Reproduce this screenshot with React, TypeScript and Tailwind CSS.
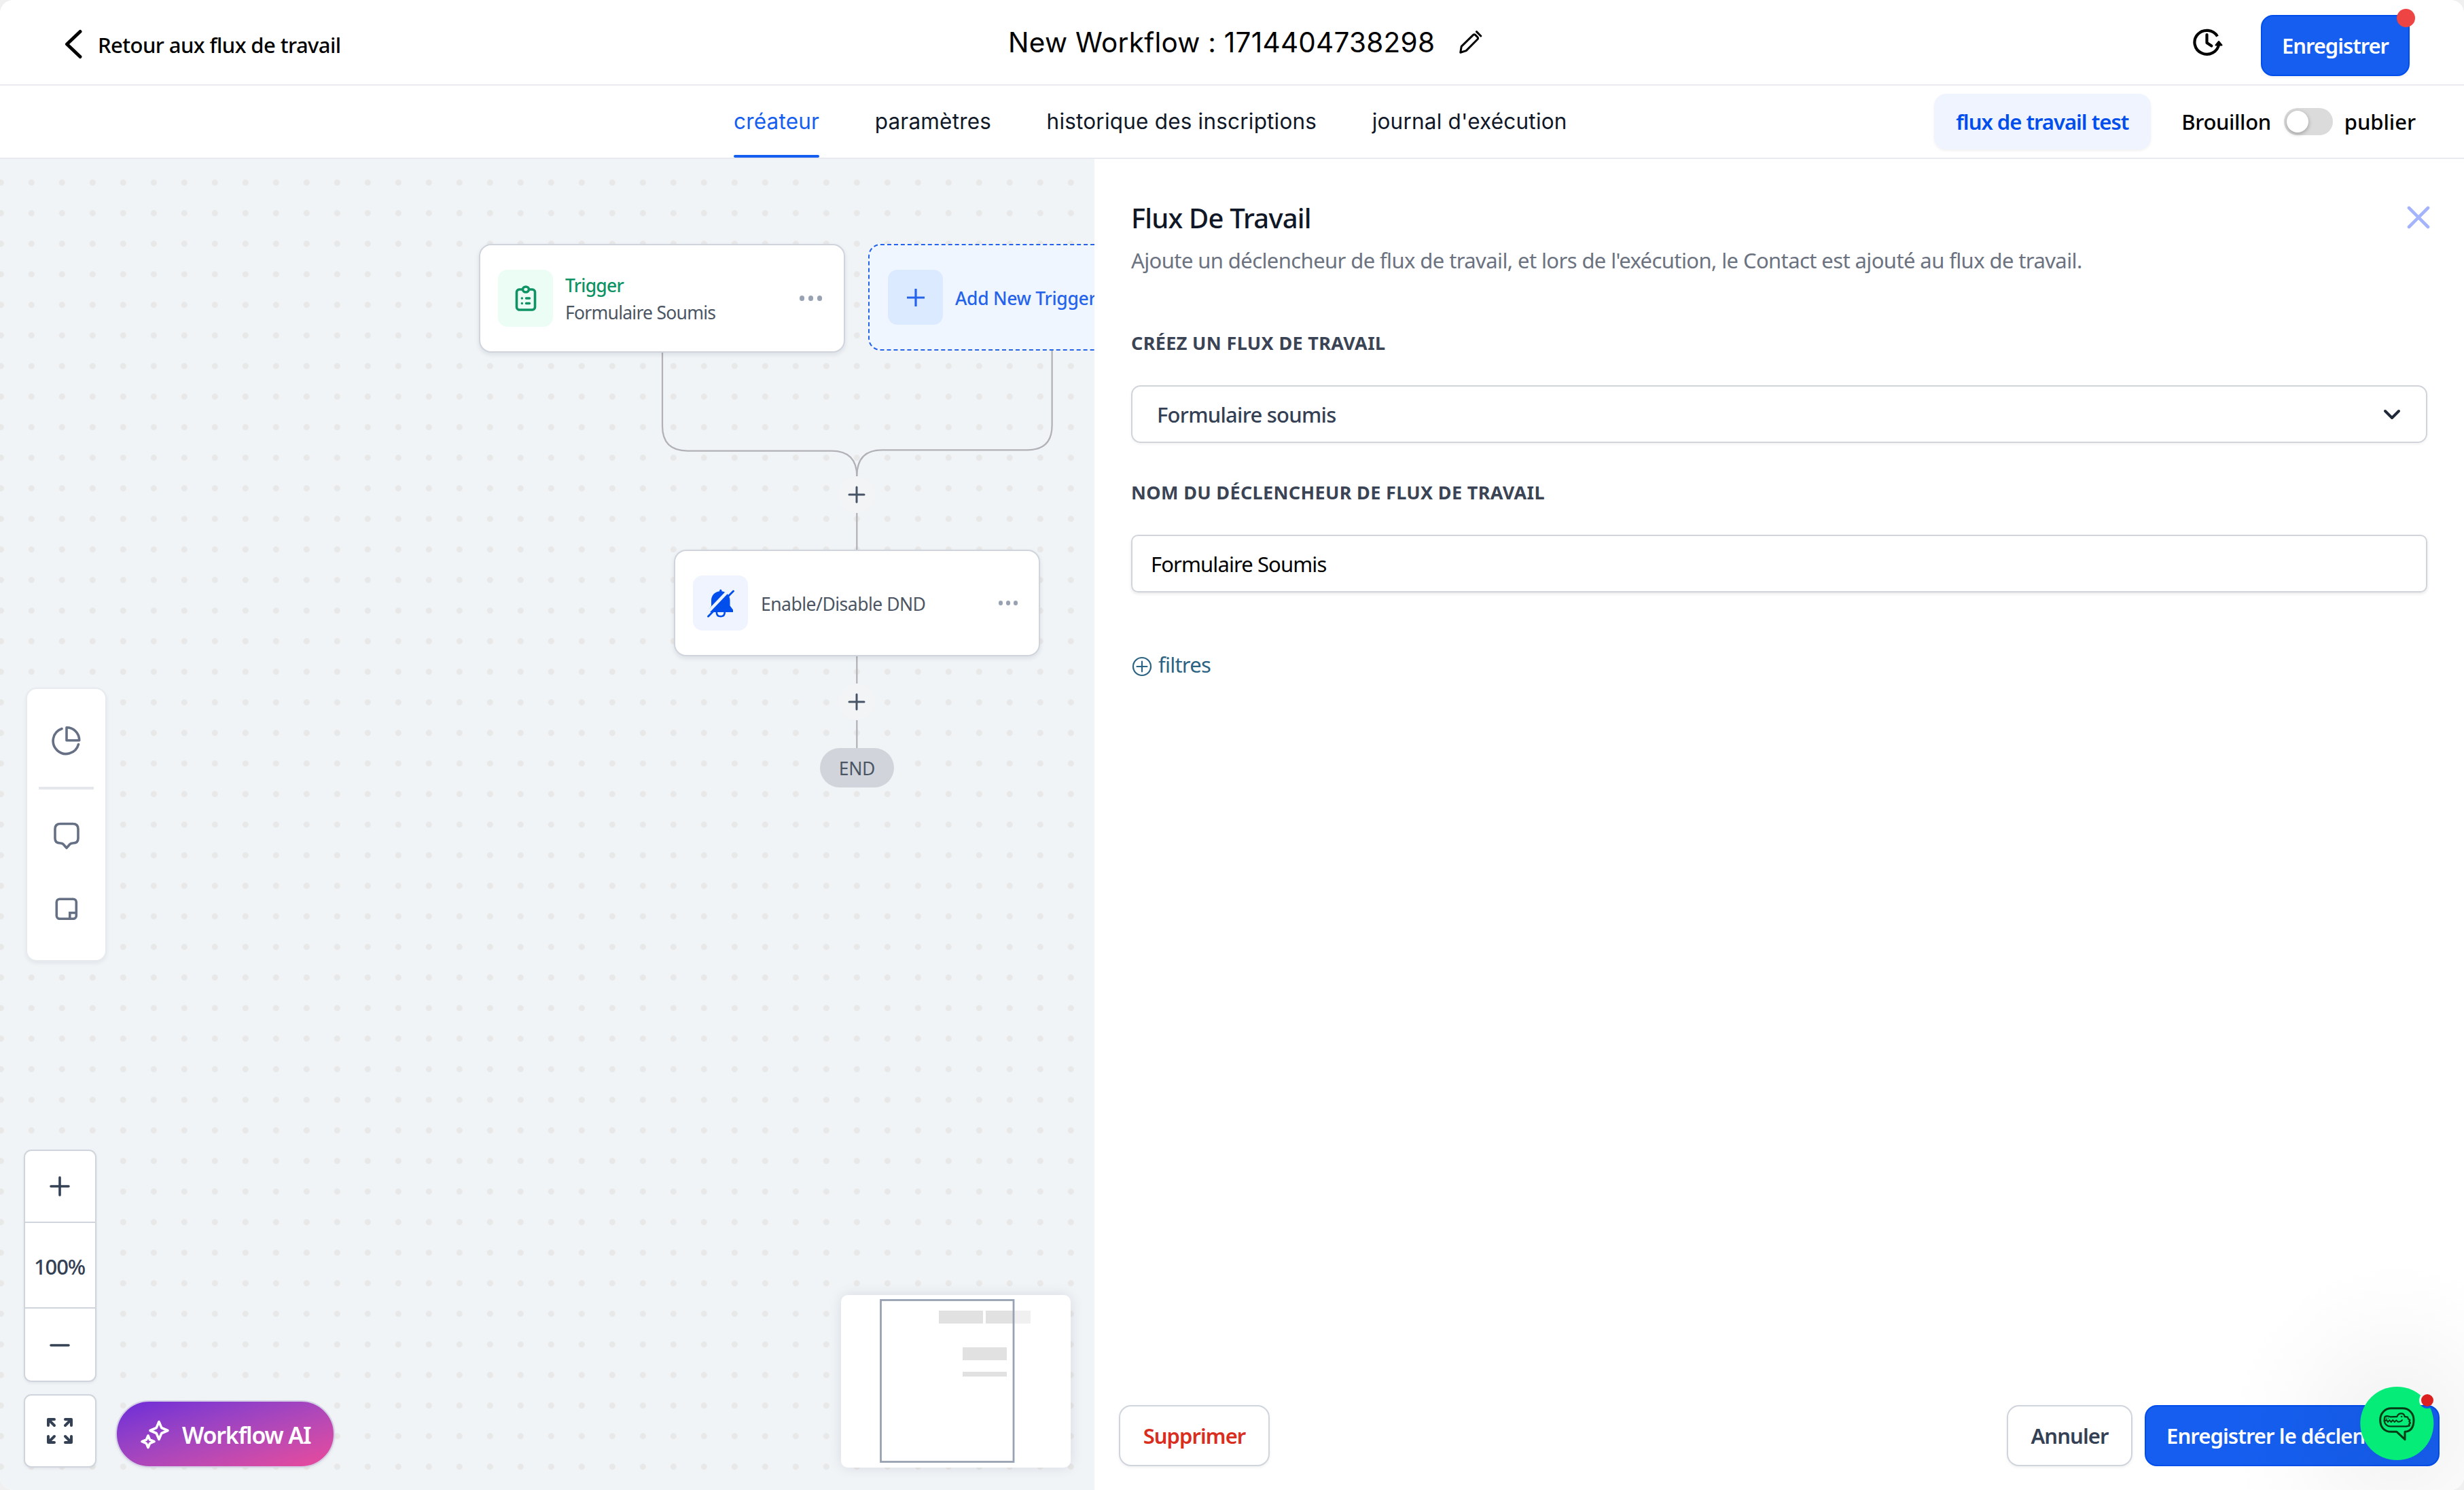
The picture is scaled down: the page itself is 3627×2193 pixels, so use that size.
import React from 'react';

const NOTO = "font-['Noto_Sans',sans-serif]";
const INTER = "font-['Inter',sans-serif]";

function Dots({ className, gap }: { className: string; gap: string }) {
  return (
    <div className={'flex items-center ' + gap}>
      <span className={'rounded-full ' + className} />
      <span className={'rounded-full ' + className} />
      <span className={'rounded-full ' + className} />
    </div>
  );
}

function Header() {
  return (
    <header className="flex h-[126px] shrink-0 items-center border-b-2 border-[#e8eaf0] bg-white">
      <div className="flex w-[1484px] items-center pl-[95px]">
        <svg className="mt-[5px] h-[44px] w-[27px]" viewBox="0 0 27 44" fill="none" stroke="#000" strokeWidth="5" strokeLinecap="round" strokeLinejoin="round">
          <path d="M23 3.5 3.5 22 23 40.5" />
        </svg>
        <span className="ml-[22px] mt-[8px] text-[31px] leading-[40px] font-medium tracking-[-0.58px] text-black">Retour aux flux de travail</span>
      </div>
      <h1 className={"mt-[1px] text-[40.5px] leading-[50px] font-normal tracking-[0.25px] text-black " + INTER}>New Workflow : 1714404738298</h1>
      <svg className="ml-[36px] h-[34px] w-[34px]" viewBox="0 0 34 34" fill="none" stroke="#000" strokeWidth="3" strokeLinecap="round" strokeLinejoin="round">
        <path d="M1.8 32.3 3.2 23.4 20.6 6.4a2.1 2.1 0 0 1 3 0L27 9.8a2.1 2.1 0 0 1 0 3L10.2 29.6Z" />
        <path d="M25.5 1.6 31.8 8" />
      </svg>
      <div className="ml-auto flex items-center pr-[80px]">
        <svg className="h-[42px] w-[44px]" viewBox="0 0 44 42" fill="none" stroke="#000" strokeWidth="4.2" strokeLinecap="round" strokeLinejoin="round">
          <path d="M36 12.5A18 17.5 0 1 0 38.3 23.5" strokeLinecap="butt" />
          <path d="M20.5 10v12l6.8 4.5" />
          <path d="M38 20 33.5 25.5h9Z" fill="#000" strokeWidth="2" />
        </svg>
        <div className="relative ml-[56px] mt-[10px]">
          <button className="flex h-[90px] w-[219px] items-center justify-center rounded-[18px] border-2 border-[#004eeb] bg-[#155eef] text-[31px] font-semibold tracking-[-1.05px] text-white shadow-[0_2px_4px_rgba(16,24,40,0.06)]">
            Enregistrer
          </button>
          <span className="absolute -top-[9px] -right-[8px] h-[27px] w-[27px] rounded-full bg-[#ef4444]" />
        </div>
      </div>
    </header>
  );
}

function Tabs() {
  return (
    <nav className="flex h-[108px] shrink-0 items-stretch border-b-2 border-[#e8eaf0] bg-white">
      <div className={"flex flex-1 items-stretch gap-[81.5px] pl-[1080px] text-[31.5px] font-normal tracking-[0.2px] text-[#101828] " + INTER}>
        <div className="relative flex items-center text-[#155eef]">
          <span>créateur</span>
          <span className="absolute inset-x-0 bottom-0 h-[4px] rounded-sm bg-[#155eef]" />
        </div>
        <div className="flex items-center">paramètres</div>
        <div className="flex items-center">historique des inscriptions</div>
        <div className="flex items-center">journal d'exécution</div>
      </div>
      <div className="flex items-center pr-[71px] text-[31px] font-medium text-black">
        <button className="flex h-[82px] w-[319px] items-center justify-center rounded-[18px] bg-[#eff4ff] pr-[1px] font-semibold tracking-[-1px] text-[#004eeb] shadow-[0_2px_4px_rgba(16,24,40,0.06)]">
          flux de travail test
        </button>
        <span className="ml-[45px] tracking-[-0.35px]">Brouillon</span>
        <span className="ml-[19px] flex h-[40px] w-[72px] items-center rounded-full bg-[#dbdbdb] pl-[4px]">
          <span className="h-[32px] w-[32px] rounded-full bg-white shadow-[0_2px_6px_rgba(0,0,0,0.3)]" />
        </span>
        <span className="ml-[17px] tracking-[-0.05px]">publier</span>
      </div>
    </nav>
  );
}

function AddStep({ className }: { className: string }) {
  return (
    <div className={'absolute left-[1234px] flex h-[54px] w-[54px] items-center justify-center rounded-full bg-[#f2f4f6] ' + className}>
      <svg className="h-[26px] w-[26px]" viewBox="0 0 26 26" stroke="#475467" strokeWidth="3" strokeLinecap="round">
        <path d="M13 2v22M2 13h22" />
      </svg>
    </div>
  );
}

function Flow() {
  return (
    <>
      <svg className="absolute inset-0 h-full w-full" viewBox="0 234 1611 1959" fill="none" stroke="#b1b1b7" strokeWidth="2.25">
        <path d="M975 519V627Q975 663.5 1012 663.5H1224Q1261.3 663.5 1261.3 701" />
        <path d="M1548.6 516V626Q1548.6 662.3 1512 662.3H1298Q1261.3 662.3 1261.3 701" />
        <path d="M1261.3 755V810M1261.3 965V1006M1261.3 1059V1102" />
      </svg>

      <div className="absolute left-[705px] top-[125px] flex h-[160px] w-[539px] items-center rounded-[18px] border-2 border-[#d0d5dd] bg-white pl-[26px] pr-[32px] shadow-[0_3px_7px_rgba(16,24,40,0.09)]">
        <div className="flex h-[84px] w-[81px] items-center justify-center rounded-[14px] bg-[#ecfdf5]">
          <svg className="h-[38px] w-[32px]" viewBox="0 0 32 38" fill="none" stroke="#0e9365" strokeWidth="3.6" strokeLinecap="round" strokeLinejoin="round">
            <path d="M10 6H6.5A4 4 0 0 0 2.5 10v22a4 4 0 0 0 4 4h19a4 4 0 0 0 4-4V10a4 4 0 0 0-4-4H22" />
            <path d="M11.5 6a4.5 4 0 0 1 9 0 4.5 4 0 0 1-9 0Z" />
            <path d="M10.3 19h.1M16.5 19h5M10.3 26.5h.1M16.5 26.5h5" strokeWidth="3.4" />
          </svg>
        </div>
        <div className="ml-[18px] mt-[2px] text-[26.5px] leading-[40px]">
          <div className="font-medium tracking-[-0.75px] text-[#0e9365]">Trigger</div>
          <div className="tracking-[-0.75px] text-[#4b5563]">Formulaire Soumis</div>
        </div>
        <div className="ml-auto">
          <Dots className="h-[7.5px] w-[7.5px] bg-[#98a2b3]" gap="gap-[5.5px]" />
        </div>
      </div>

      <div className="absolute left-[1278px] top-[125px] flex h-[157px] w-[540px] items-center rounded-[18px] border-2 border-dashed border-[#2563eb] bg-[#eff6ff] pl-[27px]">
        <div className="flex h-[81px] w-[81px] items-center justify-center rounded-[14px] bg-[#dbeafe]">
          <svg className="h-[28px] w-[28px]" viewBox="0 0 28 28" stroke="#2563eb" strokeWidth="3.2">
            <path d="M14 1v26M1 14h26" />
          </svg>
        </div>
        <span className="ml-[18px] mt-[4px] whitespace-nowrap text-[26.5px] font-medium tracking-[-0.3px] text-[#2563eb]">Add New Trigger</span>
      </div>

      <AddStep className="top-[467px]" />

      <div className="absolute left-[992px] top-[575px] flex h-[157px] w-[539px] items-center rounded-[18px] border-2 border-[#d0d5dd] bg-white pl-[26px] pr-[31px] shadow-[0_3px_7px_rgba(16,24,40,0.09)]">
        <div className="flex h-[81px] w-[81px] items-center justify-center rounded-[14px] bg-[#eff4ff]">
          <svg className="h-[42px] w-[40px]" viewBox="0 0 40 42" fill="#004eeb">
            <path d="M19.8 0.5a1.6 1.6 0 0 1 1.6 1.6V3.2C28.5 4 33.5 9.5 33.5 16.5V24.5L38 30.5V34H2V30.5L6 25V16.5C6 9.5 11 4 18.2 3.2V2.1A1.6 1.6 0 0 1 19.8 0.5Z" />
            <path d="M13.8 34C13.8 38 16 40.3 19.8 40.3S25.8 38 25.8 34" fill="none" stroke="#004eeb" strokeWidth="2.6" />
            <path d="M-3 38 35 -1.5" stroke="#eff4ff" strokeWidth="4.5" />
            <path d="M1.5 40.3 38.5 3" stroke="#004eeb" strokeWidth="2.8" strokeLinecap="round" />
          </svg>
        </div>
        <span className="ml-[19px] mt-[4px] text-[26.5px] tracking-[-0.5px] text-[#4b5563]">Enable/Disable DND</span>
        <div className="ml-auto">
          <Dots className="h-[6.5px] w-[6.5px] bg-[#98a2b3]" gap="gap-[4.5px]" />
        </div>
      </div>

      <AddStep className="top-[772px]" />

      <div className="absolute left-[1207px] top-[867px] flex h-[58px] w-[109px] items-center justify-center rounded-full bg-[#d1d5db] pt-[3px] text-[26.5px] tracking-[-0.3px] text-[#4b5563]">
        END
      </div>
    </>
  );
}

function Tools() {
  return (
    <>
      <div className="absolute left-[38px] top-[778px] flex h-[403px] w-[119px] flex-col items-center rounded-[16px] border-2 border-[#e7eaee] bg-white shadow-[0_3px_6px_rgba(16,24,40,0.06)]">
        <svg className="mt-[54px] h-[44px] w-[44px]" viewBox="0 0 44 44" fill="none" stroke="#667085" strokeWidth="3.6" strokeLinecap="round" strokeLinejoin="round">
          <path d="M15 4.5A19 19 0 1 0 39.5 27.5" />
          <path d="M22 2.8V21.7H40.7C40.7 11 32.5 2.8 22 2.8Z" />
        </svg>
        <div className="mt-[46px] h-[4px] w-[81px] bg-[#e4e7eb]" />
        <svg className="mt-[48px] h-[40px] w-[40px]" viewBox="0 0 40 40" fill="none" stroke="#667085" strokeWidth="3.6" strokeLinecap="round" strokeLinejoin="round">
          <path d="M11 2.5H29C34.5 2.5 37 5 37 10V24C37 29 34.5 31 29 31C26.5 31 25.5 31.5 24 33.5L20 38 16 33.5C14.5 31.5 13.5 31 11 31C5.5 31 3 29 3 24V10C3 5 5.5 2.5 11 2.5Z" />
        </svg>
        <svg className="mt-[71px] h-[34px] w-[34px]" viewBox="0 0 34 34" fill="none" stroke="#667085" strokeWidth="3.6">
          <rect x="2.3" y="2.3" width="29" height="29" rx="4.5" />
          <path d="M31 22.5H21.8V31" />
        </svg>
      </div>

      <div className="absolute left-[35px] top-[1458px] flex h-[342px] w-[107px] flex-col rounded-[11px] border-2 border-[#d0d5dd] bg-white text-[#344054] shadow-[0_2px_4px_rgba(16,24,40,0.06)]">
        <div className="flex h-[106px] items-center justify-center border-b-2 border-[#d0d5dd] pr-[2px]">
          <svg className="h-[32px] w-[32px]" viewBox="0 0 32 32" stroke="currentColor" strokeWidth="3.6" strokeLinecap="round">
            <path d="M16 3v26M3 16h26" />
          </svg>
        </div>
        <div className="flex h-[126px] items-center justify-center border-b-2 border-[#d0d5dd] pt-[4px] pr-[2px] text-[31px] font-medium tracking-[-1.1px]">100%</div>
        <div className="flex flex-1 items-center justify-center pr-[2px] pt-[2px]">
          <svg className="h-[32px] w-[32px]" viewBox="0 0 32 32" stroke="currentColor" strokeWidth="3.6" strokeLinecap="round">
            <path d="M3 16h26" />
          </svg>
        </div>
      </div>

      <div className="absolute left-[35px] top-[1818px] flex h-[108px] w-[107px] items-center justify-center rounded-[11px] border-2 border-[#d0d5dd] bg-white pr-[1px] shadow-[0_2px_4px_rgba(16,24,40,0.06)]">
        <svg className="h-[40px] w-[40px]" viewBox="0 0 40 40" fill="none" stroke="#344054" strokeWidth="4" strokeLinecap="round" strokeLinejoin="round">
          <path d="M3 12V3h9M3.5 3.5 12 12M28 3h9v9M36.5 3.5 28 12M3 28v9h9M3.5 36.5 12 28M28 37h9v-9M36.5 36.5 28 28" />
          <path d="M3 9V3h6ZM37 9V3h-6ZM3 31v6h6ZM37 31v6h-6Z" fill="#344054" strokeWidth="2" />
        </svg>
      </div>

      <button className="absolute left-[170px] top-[1827px] flex h-[99px] w-[323px] items-center rounded-full border-2 border-[#d3cfe4] bg-linear-to-br from-[#6d28d9] to-[#ec4899] bg-origin-border pl-[34px] text-white shadow-[0_2px_4px_rgba(16,24,40,0.06)]">
        <svg className="h-[44px] w-[44px]" viewBox="0 0 44 44" fill="none" stroke="#fff" strokeWidth="3.6" strokeLinejoin="round">
          <path d="M28 3.5 31.8 12.5 41 16.5 31.8 20.5 28 29.5 24.2 20.5 15 16.5 24.2 12.5Z" />
          <path d="M12 24 14.6 30 21 32.7 14.6 35.4 12 41.5 9.4 35.4 3 32.7 9.4 30Z" />
        </svg>
        <span className="ml-[18px] mt-[3px] text-[34px] font-semibold tracking-[-1.2px]">Workflow AI</span>
      </button>

      <div className="absolute left-[1238px] top-[1672px] h-[254px] w-[338px] rounded-[10px] bg-white shadow-[0_0_20px_rgba(16,24,40,0.1)]">
        <svg className="h-full w-full" viewBox="1238 1906 338 254" fill="none">
          <rect x="1382" y="1929" width="65" height="19" fill="#e1e1e1" />
          <rect x="1451" y="1929" width="42" height="19" fill="#e1e1e1" />
          <rect x="1493" y="1929" width="24" height="19" fill="#f0f0f0" />
          <rect x="1417" y="1983" width="65" height="19" fill="#e1e1e1" />
          <rect x="1417" y="2019" width="65" height="7" fill="#e1e1e1" />
          <rect x="1296.5" y="1913.5" width="195.5" height="238" stroke="#98a2b3" strokeWidth="2.8" />
        </svg>
      </div>
    </>
  );
}

function Panel() {
  return (
    <section className="flex flex-1 flex-col bg-white pl-[54px] pr-[54px] pt-[62px]">
      <div className="flex items-start">
        <h2 className="h-[62px] text-[40px] leading-[50px] font-medium tracking-[-0.8px] text-[#101828]">Flux De Travail</h2>
        <svg className="-mr-[4px] ml-auto mt-[7px] h-[34px] w-[34px]" viewBox="0 0 34 34" stroke="#a4b4fc" strokeWidth="4.6" strokeLinecap="round">
          <path d="M3 3l28 28M31 3 3 31" />
        </svg>
      </div>
      <p className="text-[31px] leading-[50px] tracking-[-0.6px] text-[#6b7280]">
        Ajoute un déclencheur de flux de travail, et lors de l'exécution, le Contact est ajouté au flux de travail.
      </p>
      <label className="mt-[77px] text-[27px] leading-[40px] font-bold tracking-[0.35px] text-[#3a4454]">CRÉEZ UN FLUX DE TRAVAIL</label>
      <div className="mt-[42px] flex h-[85px] items-center rounded-[14px] border-2 border-[#d1d5db] pl-[36px] pr-[37px] shadow-[0_2px_4px_rgba(16,24,40,0.05)]">
        <span className="mt-[1px] text-[31px] font-medium tracking-[-0.75px] text-[#344054]">Formulaire soumis</span>
        <svg className="ml-auto h-[26px] w-[26px]" viewBox="0 0 26 26" fill="none" stroke="#1f2937" strokeWidth="4" strokeLinecap="round" strokeLinejoin="round">
          <path d="M3 8l10 10L23 8" />
        </svg>
      </div>
      <label className="mt-[53px] text-[27px] leading-[40px] font-bold tracking-[0.34px] text-[#3a4454]">NOM DU DÉCLENCHEUR DE FLUX DE TRAVAIL</label>
      <div className="mt-[42px] flex h-[85px] items-center rounded-[10px] border-2 border-[#d1d5db] pl-[27px] shadow-[0_2px_4px_rgba(16,24,40,0.1)]">
        <span className="mt-[1px] text-[31px] tracking-[-0.9px] text-black">Formulaire Soumis</span>
      </div>
      <div className="mt-[85px] flex items-center pl-[1px] text-[#2b6384]">
        <svg className="mt-[5px] h-[30px] w-[30px]" viewBox="0 0 30 30" fill="none" stroke="currentColor" strokeWidth="2.2" strokeLinecap="round">
          <circle cx="15" cy="15" r="13" />
          <path d="M15 7.5v15M7.5 15h15" />
        </svg>
        <span className="ml-[9px] text-[31px] leading-[42px] tracking-[-0.75px]">filtres</span>
      </div>

      <footer className="-ml-[18px] -mr-[18px] mb-[35px] mt-auto flex items-center text-[31px] font-semibold">
        <button className="h-[90px] w-[222px] rounded-[18px] border-2 border-[#d0d5dd] bg-white tracking-[-0.95px] text-[#d92d20] shadow-[0_2px_4px_rgba(16,24,40,0.06)]">Supprimer</button>
        <button className="ml-auto h-[90px] w-[185px] rounded-[18px] border-2 border-[#d0d5dd] bg-white tracking-[-0.9px] text-[#344054] shadow-[0_2px_4px_rgba(16,24,40,0.06)]">Annuler</button>
        <button className="ml-[18px] h-[90px] w-[434px] whitespace-nowrap rounded-[18px] border-2 border-[#004eeb] bg-[#155eef] pl-[30px] text-left tracking-[-0.9px] text-white">Enregistrer le déclencheur</button>
      </footer>
    </section>
  );
}

function ChatWidget() {
  return (
    <>
      <div className="absolute -right-[161px] -bottom-[170px] h-[520px] w-[520px] rounded-full bg-[radial-gradient(circle,rgba(0,0,0,0.04)_15%,rgba(0,0,0,0.012)_45%,rgba(0,0,0,0)_68%)]" />
      <svg className="absolute right-[27px] bottom-[33px] h-[130px] w-[140px]" viewBox="0 0 420 390">
        <mask id="notch">
          <rect width="420" height="390" fill="#fff" />
          <circle cx="339" cy="93" r="36" fill="#000" />
        </mask>
        <circle cx="205" cy="195" r="162" fill="#05ec79" mask="url(#notch)" />
        <circle cx="339" cy="93" r="27" fill="#dc2020" />
        <g fill="none" stroke="#053b14" strokeLinejoin="round" strokeLinecap="round">
          <path strokeWidth="9" d="M180 128.5H230C258 128.5 279 150 279 180C279 212 265 230 240 232V266L204 232H180C150 232 131 212 131 180C131 150 152 128.5 180 128.5Z" />
          <path strokeWidth="7" d="M150 171C150 164 157 162 165 163L177 166 205 165C209 155 216 151 224 151C232 151 238 157 239 165L252 167 255 175 262 180 259 187 264 193 258 199 260 205 246 208H176C160 208 150 196 149 184Z" />
          <path strokeWidth="6" d="M152 184 159 179 165 189 172 180 179 189 187 180 194 189 202 181 209 188C218 188 225 185 228 180" />
          <circle cx="225" cy="165" r="2.5" fill="#053b14" strokeWidth="3" />
          <path strokeWidth="4" d="M157 172h1M166 172h1" />
        </g>
      </svg>
    </>
  );
}

export default function App() {
  return (
    <div className={"h-[2193px] w-[3627px] overflow-hidden bg-[#f0f0f0] " + NOTO}>
      <div className="relative flex h-full w-full flex-col overflow-hidden rounded-[20px] bg-white">
        <Header />
        <Tabs />
        <main className="flex min-h-0 flex-1">
          <div className="relative w-[1611px] shrink-0 overflow-hidden bg-[#f0f4f7] bg-[radial-gradient(circle,#e8e8e8_4px,transparent_5px)] bg-[length:45px_45px] bg-[position:-21.2px_12.2px]">
            <Flow />
            <Tools />
          </div>
          <Panel />
        </main>
        <ChatWidget />
      </div>
    </div>
  );
}
